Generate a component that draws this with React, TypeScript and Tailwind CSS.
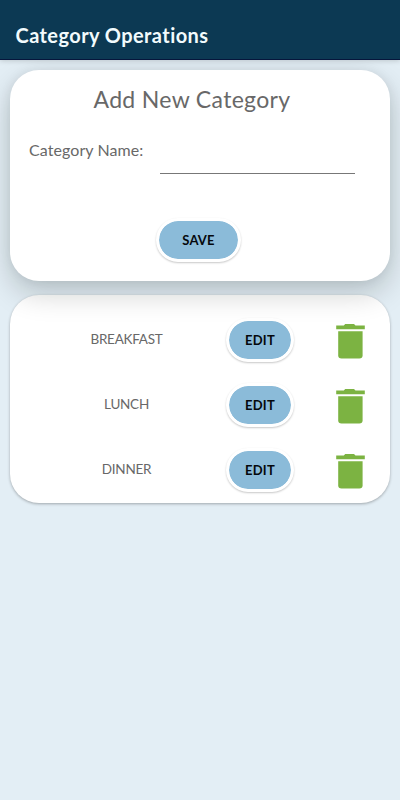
const categories = ["BREAKFAST", "LUNCH", "DINNER"];

function PillButton({ label, className }: { label: string; className: string }) {
  return (
    <button
      className={`h-[44.5px] shrink-0 rounded-full border-[3px] border-white bg-[#8bbbd9] bg-clip-padding text-[13px] font-bold tracking-[0.2px] text-[#05080c] shadow-[0_1px_2px_rgba(0,0,0,0.22)] ${className}`}
    >
      {label}
    </button>
  );
}

function TrashIcon() {
  return (
    <svg className="h-[35px] w-[29px] shrink-0" viewBox="0 0 29 35" fill="#7cb342">
      <path d="M0.2 1.5H7.8L9.2 0H18L19.5 1.5H28.8V5.3H0.2Z" />
      <path d="M2.2 7.2H26.6V31.3Q26.6 34.6 23.3 34.6H5.5Q2.2 34.6 2.2 31.3Z" />
    </svg>
  );
}

export default function App() {
  return (
    <div className="flex h-[800px] w-[400px] flex-col overflow-hidden bg-[#e3eef5] font-['Lato','Noto_Sans',sans-serif] text-[#686868]">
      <header className="relative z-20 flex h-[60px] shrink-0 items-end border-b border-[#06163c] bg-[#0c3953] px-[15.5px] pb-[12px] shadow-[0_1px_5px_rgba(0,0,0,0.16)]">
        <h1 className="whitespace-nowrap text-[20px] leading-[24px] font-bold tracking-[0.42px] text-[#f2fbfd]">
          Category Operations
        </h1>
      </header>
      <main className="flex flex-col gap-[14px] px-[10px] pt-[10px]">
        <section className="relative z-10 h-[211px] rounded-[29px] bg-white shadow-[0_12px_30px_rgba(0,15,10,0.2),0_0_12px_rgba(0,15,10,0.07)]">
          <h2 className="pt-[14px] pr-[16px] text-center text-[23px] leading-[30px] tracking-[0.33px]">
            Add New Category
          </h2>
          <div className="mt-[24px] flex h-[36px] pl-[19px]">
            <label className="w-[130.5px] text-[16px] leading-[24px] tracking-[0.08px]">
              Category Name:
            </label>
            <input className="w-[195px] border-b border-[#777] outline-none" />
          </div>
          <div className="mt-[43.5px] flex justify-center pr-[3px]">
            <PillButton label="SAVE" className="w-[85px] pt-px" />
          </div>
        </section>
        <section className="h-[208px] rounded-[29px] bg-white pt-[13px] shadow-[0_1px_3px_rgba(0,0,0,0.3)]">
          {categories.map((name) => (
            <div key={name} className="flex h-[65px] items-center">
              <span className="ml-[16px] w-[201px] pb-[3px] text-center text-[13.5px] tracking-[-0.25px]">
                {name}
              </span>
              <PillButton label="EDIT" className="mb-px ml-[-1px] w-[68px] pt-px" />
              <div className="ml-[42px] flex pt-[1px]">
                <TrashIcon />
              </div>
            </div>
          ))}
        </section>
      </main>
    </div>
  );
}
